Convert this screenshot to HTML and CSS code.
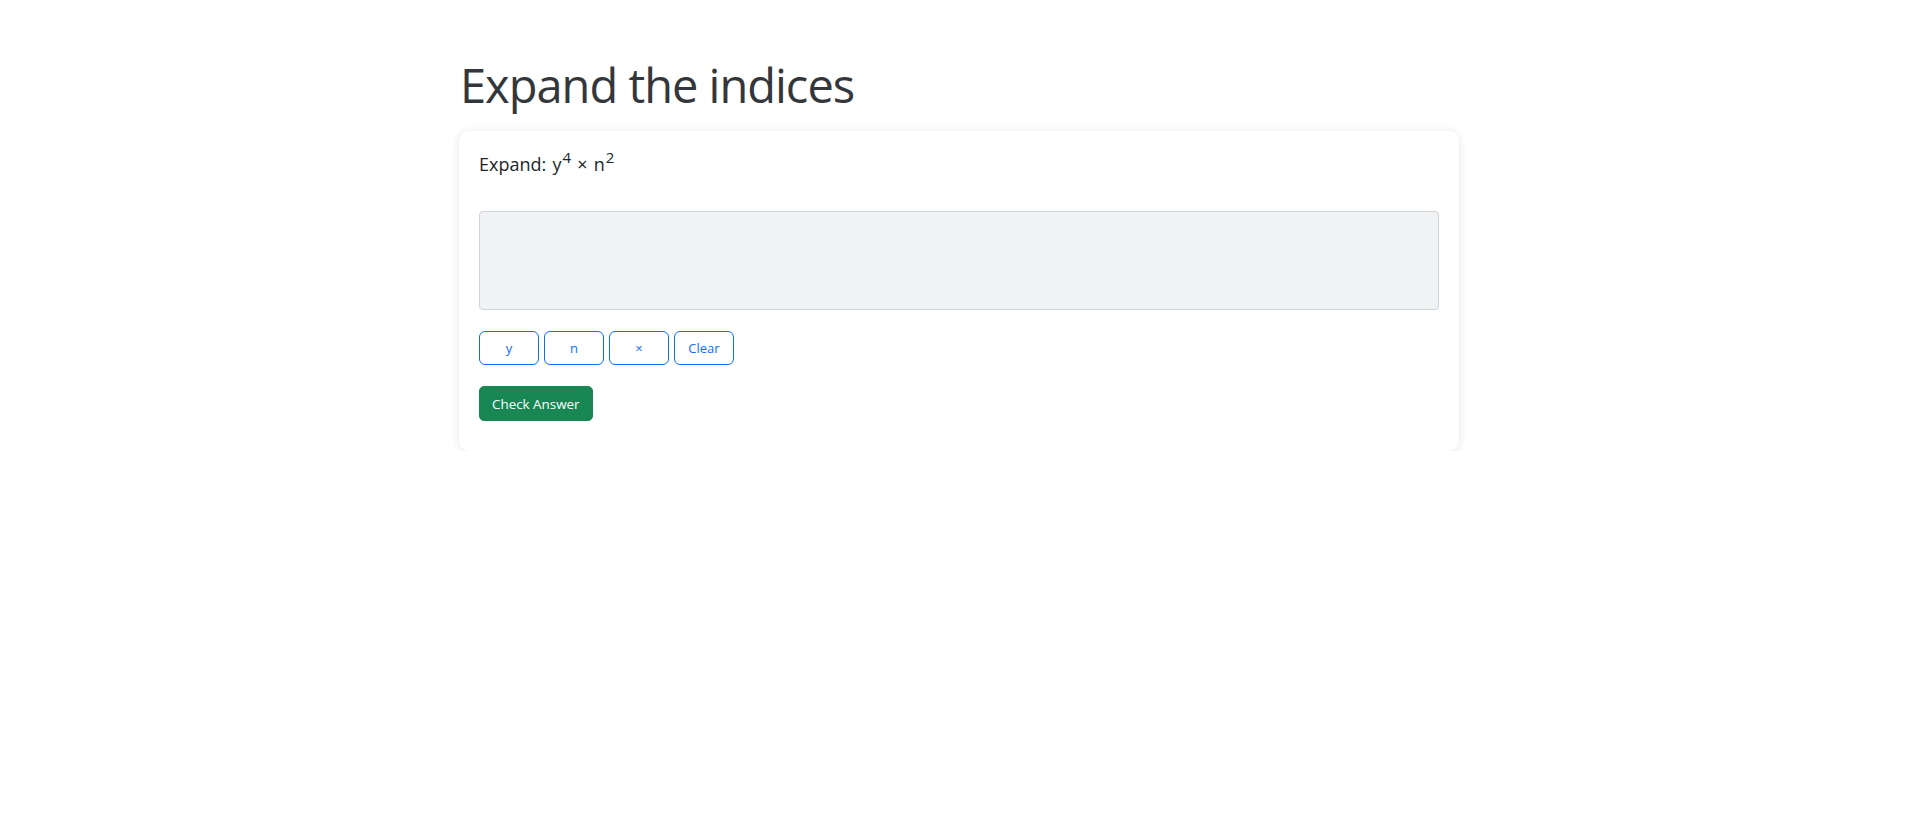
FILE: index.html
```html
<!DOCTYPE html>
<html lang="en">
<head>
<meta charset="utf-8">
<title>Expand the indices</title>
<link rel="stylesheet" href="styles.css">
</head>
<body>
<main class="container">
  <h1 class="title">Expand the indices</h1>
  <section class="card">
    <p class="question">Expand: y<sup>4</sup> × n<sup>2</sup></p>
    <div class="answer-box"></div>
    <div class="keypad">
      <button class="btn btn-outline">y</button>
      <button class="btn btn-outline">n</button>
      <button class="btn btn-outline">×</button>
      <button class="btn btn-outline">Clear</button>
    </div>
    <button class="btn btn-success">Check Answer</button>
  </section>
</main>
</body>
</html>
```

FILE: styles.css
```css
* { box-sizing: border-box; }

html, body {
  margin: 0;
  padding: 0;
  background: #ffffff;
}

body {
  font-family: "Segoe UI", "Open Sans", "Noto Sans", "Liberation Sans", sans-serif;
  color: #212529;
}

.container {
  max-width: 1000px;
  margin: 0 auto;
  padding-top: 57px;
}

.title {
  font-size: 47px;
  font-weight: 400;
  letter-spacing: -1px;
  line-height: 1.2;
  color: #33373b;
  margin: 0 0 18px 1px;
}

.card {
  background: #fff;
  border-radius: 10px;
  box-shadow: 0 1px 10px rgba(0, 0, 0, 0.1);
  padding: 20px 20px 30px;
}

.question {
  font-size: 18px;
  line-height: 1.5;
  word-spacing: 1.5px;
  margin: 0 0 33px;
}

.question sup {
  font-size: 15px;
  line-height: 0;
  position: relative;
  top: -8px;
  vertical-align: baseline;
  margin-left: 1px;
}

.answer-box {
  height: 99px;
  background: #f1f2f4;
  border: 1px solid #cfd3da;
  border-radius: 4px;
  margin-bottom: 21px;
}

.keypad {
  display: flex;
  gap: 5px;
  margin-bottom: 21px;
}

.btn {
  font-family: inherit;
  cursor: pointer;
  border-radius: 6px;
  background: #fff;
}

.btn-outline {
  width: 60px;
  height: 34px;
  font-size: 13px;
  color: #0d6efd;
  border: 1px solid #0d6efd;
  padding: 0;
}

.btn-success {
  height: 35px;
  padding: 0 12px;
  font-size: 13.4px;
  color: #fff;
  background: #198754;
  border: 1px solid #198754;
  border-radius: 5px;
}
```
